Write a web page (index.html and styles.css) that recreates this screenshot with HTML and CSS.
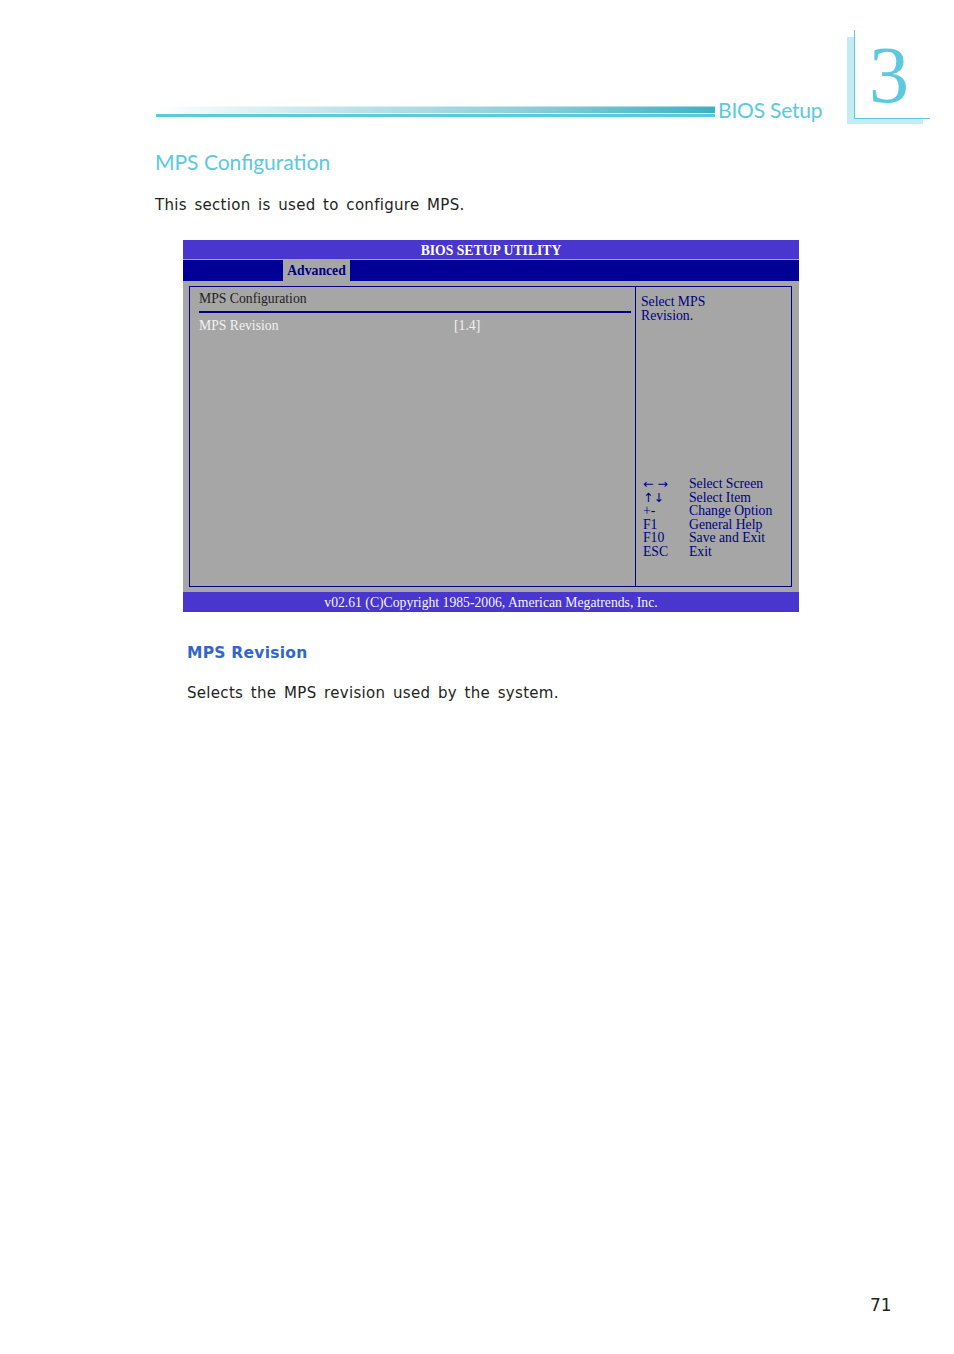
FILE: index.html
```html
<!DOCTYPE html>
<html>
<head>
<meta charset="utf-8">
<title>MPS Configuration</title>
<link rel="stylesheet" href="styles.css">
</head>
<body>
<div class="page">
  <header class="top">
    <div class="rule"><div class="rule-light"></div><div class="rule-solid"></div></div>
    <div class="section-label">BIOS Setup</div>
    <div class="chapter">
      <div class="chapter-shadow"></div>
      <div class="chapter-box">3</div>
    </div>
  </header>

  <h1 class="title">MPS Configuration</h1>
  <p class="intro">This section is used to configure MPS.</p>

  <div class="bios">
    <div class="bios-title">BIOS SETUP UTILITY</div>
    <div class="bios-tabs"><div class="bios-tab">Advanced</div></div>
    <div class="bios-body">
      <div class="bios-frame">
        <div class="pane-left">
          <div class="row-head">MPS Configuration</div>
          <div class="row-rule"></div>
          <div class="row-item"><span class="item-name">MPS Revision</span><span class="item-value">[1.4]</span></div>
        </div>
        <div class="pane-right">
          <div class="help-text">Select MPS<br>Revision.</div>
          <div class="keys">
            <div class="key-row"><span class="key arrows">&larr; &rarr;</span><span class="desc">Select Screen</span></div>
            <div class="key-row"><span class="key arrows">&uarr;&darr;</span><span class="desc">Select Item</span></div>
            <div class="key-row"><span class="key">+-</span><span class="desc">Change Option</span></div>
            <div class="key-row"><span class="key">F1</span><span class="desc">General Help</span></div>
            <div class="key-row"><span class="key">F10</span><span class="desc">Save and Exit</span></div>
            <div class="key-row"><span class="key">ESC</span><span class="desc">Exit</span></div>
          </div>
        </div>
      </div>
    </div>
    <div class="bios-foot">v02.61 (C)Copyright 1985-2006, American Megatrends, Inc.</div>
  </div>

  <h2 class="sub">MPS Revision</h2>
  <p class="desc-text">Selects the MPS revision used by the system.</p>

  <div class="page-num">71</div>
</div>
</body>
</html>
```

FILE: styles.css
```css
html, body {
  margin: 0;
  padding: 0;
  background: #ffffff;
}
.page {
  width: 954px;
  height: 1354px;
  position: relative;
  font-family: "DejaVu Sans", Verdana, sans-serif;
  color: #231f20;
}

/* header */
.top {
  display: flex;
  align-items: flex-end;
  height: 125px;
  padding-left: 156px;
  box-sizing: border-box;
}
.rule {
  width: 559px;
  margin-bottom: 8px;
  display: flex;
  flex-direction: column;
}
.rule-light {
  height: 7px;
  background: linear-gradient(to right, #ffffff 0%, #c4e6ec 30%, #8fcfda 65%, #3db1c2 100%);
  border-top: 1px solid rgba(255,255,255,0.5);
  box-sizing: border-box;
}
.rule-solid {
  height: 3px;
  margin-top: 1px;
  background: #5bc9de;
}
.section-label {
  width: 106px;
  white-space: nowrap;
  font-family: Lato, "Open Sans", sans-serif;
  font-size: 21px;
  line-height: 22px;
  color: #5bc9de;
  margin-left: 3px;
  margin-bottom: 4px;
  letter-spacing: -0.2px;
}
.chapter {
  position: relative;
  width: 83px;
  height: 94px;
  margin-left: 23px;
  margin-bottom: 1px;
}
.chapter-shadow {
  position: absolute;
  left: 0;
  top: 7px;
  width: 76px;
  height: 87px;
  background: #c5ebf3;
}
.chapter-box {
  position: absolute;
  left: 7px;
  top: 0;
  width: 76px;
  height: 89px;
  box-sizing: border-box;
  background: #ffffff;
  border-left: 1.5px solid #5bc9de;
  border-bottom: 1.5px solid #5bc9de;
  font-family: "Liberation Serif", "Times New Roman", serif;
  font-size: 80px;
  line-height: 78px;
  color: #5bc9de;
  padding-left: 14px;
  padding-top: 6px;
}

.title {
  margin: 24px 0 0 155px;
  font-family: Lato, "Open Sans", sans-serif;
  font-weight: normal;
  font-size: 21px;
  line-height: 25px;
  color: #5bc9de;
}
.intro {
  margin: 22px 0 0 155px;
  font-size: 15px;
  line-height: 18px;
  letter-spacing: 0.3px;
  word-spacing: 2.5px;
}

/* BIOS screen */
.bios {
  margin: 26px 0 0 183px;
  width: 616px;
  font-family: "Liberation Serif", "Times New Roman", serif;
  font-size: 13.7px;
}
.bios-title {
  height: 20px;
  box-sizing: border-box;
  background: #4836cf;
  border-bottom: 1px solid #a7a0e4;
  color: #ffffff;
  font-weight: bold;
  font-size: 13.7px;
  line-height: 21px;
  text-align: center;
}
.bios-tabs {
  height: 21px;
  background: #000096;
  padding-left: 100px;
  display: flex;
}
.bios-tab {
  width: 67px;
  background: #a6a6a6;
  color: #000080;
  font-weight: bold;
  text-align: center;
  line-height: 21px;
}
.bios-body {
  background: #a6a6a6;
  padding: 5px 7px 5px 6px;
}
.bios-frame {
  height: 301px;
  box-sizing: border-box;
  border: 1px solid #000080;
  display: flex;
}
.pane-left {
  width: 446px;
  border-right: 1px solid #000080;
  padding: 5px 4px 0 9px;
  box-sizing: border-box;
}
.row-head {
  line-height: 14px;
  color: #222222;
}
.row-rule {
  height: 2px;
  background: #000080;
  margin-top: 4.5px;
}
.row-item {
  margin-top: 6.5px;
  line-height: 14px;
  color: #f2f2f2;
  display: flex;
}
.item-name {
  width: 255px;
}
.pane-right {
  flex: 1;
  display: flex;
  flex-direction: column;
  color: #000080;
}
.help-text {
  padding: 8px 0 0 5px;
  line-height: 14px;
}
.keys {
  margin-top: auto;
  padding: 0 0 28px 7px;
}
.key-row {
  display: flex;
  line-height: 13.5px;
}
.key {
  width: 46px;
}
.arrows {
  font-family: "DejaVu Sans", sans-serif;
  font-size: 12.5px;
}
.bios-foot {
  height: 20px;
  background: #4836cf;
  color: #f4f4ff;
  text-align: center;
  line-height: 21px;
}

.sub {
  margin: 32px 0 0 187px;
  font-size: 15.5px;
  line-height: 18px;
  font-weight: bold;
  letter-spacing: 0.25px;
  color: #3366cc;
}
.desc-text {
  margin: 22px 0 0 187px;
  font-size: 15px;
  line-height: 18px;
  letter-spacing: 0.3px;
  word-spacing: 2.6px;
}
.page-num {
  position: absolute;
  left: 870px;
  top: 1296px;
  font-size: 17px;
  line-height: 18px;
}
```
